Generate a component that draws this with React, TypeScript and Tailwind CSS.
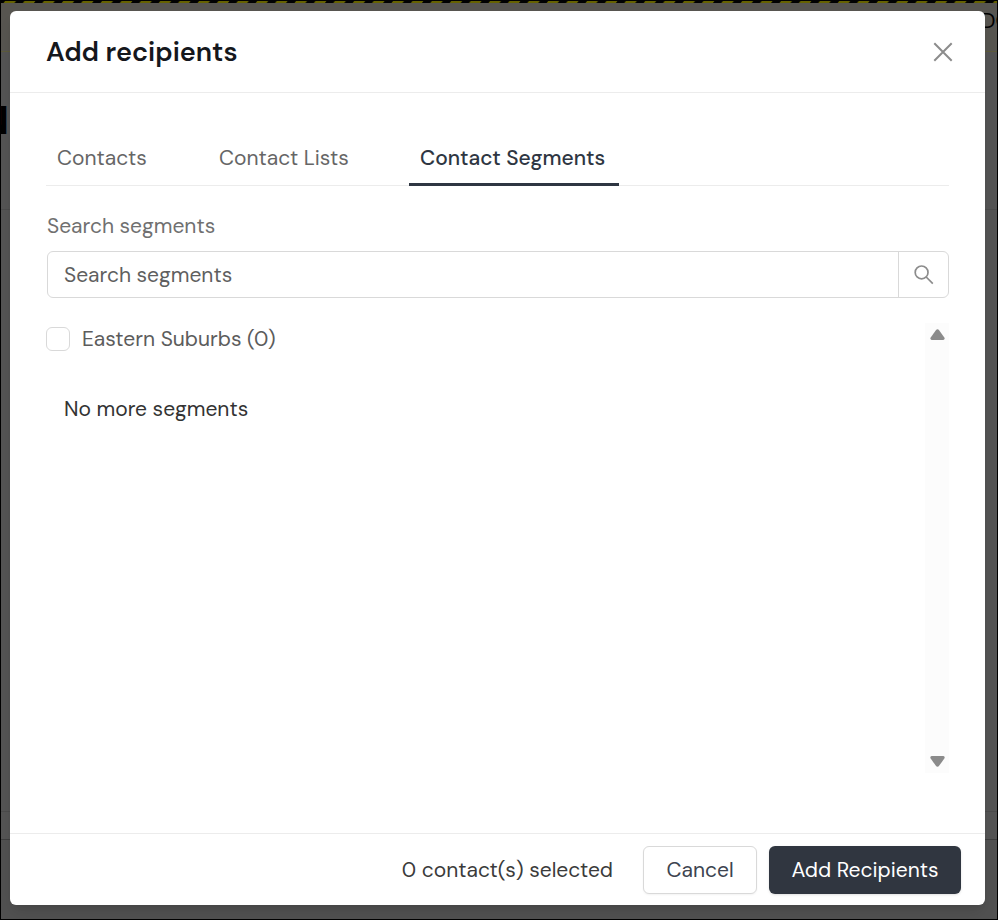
import { useState } from 'react'

const TABS = [
  { id: 'contacts', label: 'Contacts', width: 'w-28' },
  { id: 'lists', label: 'Contact Lists', width: 'w-[151px]' },
  { id: 'segments', label: 'Contact Segments', width: 'w-[210px]' },
]

const SEGMENTS = [{ id: 'eastern-suburbs', name: 'Eastern Suburbs', count: 0 }]

function CloseIcon() {
  return (
    <svg width="20" height="20" viewBox="0 0 20 20" fill="none" stroke="#8c8c8c" strokeWidth="2" aria-hidden="true">
      <path d="M1.3 1.3 18.7 18.7M18.7 1.3 1.3 18.7" />
    </svg>
  )
}

function SearchIcon() {
  return (
    <svg width="20" height="20" viewBox="0 0 20 20" fill="none" stroke="#8c8c8c" strokeWidth="1.7" aria-hidden="true">
      <circle cx="7.6" cy="7.4" r="6.4" />
      <path d="M12.2 12 18.8 18.6" />
    </svg>
  )
}

function Arrow({ down = false }: { down?: boolean }) {
  return (
    <svg width="15" height="11" viewBox="0 0 15 11" fill="#8b8b8b" aria-hidden="true">
      {down ? (
        <path d="M1.6 0H13.4Q15.2 .5 14.5 2.3L9.3 9.6Q7.5 12 5.7 9.6L.5 2.3Q-.2.5 1.6 0Z" />
      ) : (
        <path d="M1.6 11H13.4Q15.2 10.5 14.5 8.7L9.3 1.4Q7.5-1 5.7 1.4L.5 8.7Q-.2 10.5 1.6 11Z" />
      )}
    </svg>
  )
}

// Dimmed page behind the dialog
function Backdrop() {
  return (
    <div className="absolute inset-0 flex flex-col overflow-hidden border border-black bg-[#545454]" aria-hidden="true">
      <svg className="h-[2px] w-full shrink-0 bg-black">
        <defs>
          <pattern id="hazard" width="19.4" height="2" patternUnits="userSpaceOnUse">
            <path d="M4 0H15L13.5 2H2.5Z" fill="#666200" />
          </pattern>
        </defs>
        <rect width="100%" height="2" fill="url(#hazard)" />
      </svg>
      <div className="flex h-[49px] shrink-0 justify-end border-b border-[#5d5b3c] bg-[#575550] pt-1">
        <span className="w-4 overflow-hidden text-[21px] leading-7 whitespace-nowrap text-black">DO</span>
      </div>
      <div className="flex h-[158px] shrink-0 items-start border-b border-[#4c4c4c] pt-12">
        <span className="flex w-[9px] justify-end overflow-hidden pr-px text-[40px] leading-10 font-bold text-black">N</span>
      </div>
      <div className="flex-1 bg-[#545454]" />
      <div className="h-[29px] shrink-0 border-y border-t-[#4b4b4b] border-b-[#3e3e3e]" />
      <div className="h-[79px] shrink-0 bg-[#515151]" />
    </div>
  )
}

export default function App() {
  const [tab, setTab] = useState('segments')
  const [query, setQuery] = useState('')

  return (
    <div className="relative flex min-h-screen flex-col pt-[11px] pr-[13px] pb-[15px] pl-[10px] font-['DM_Sans',Inter,sans-serif] text-[21px] leading-8">
      <Backdrop />

      <div role="dialog" aria-labelledby="dialog-title" className="relative flex flex-1 flex-col rounded-md bg-white shadow-lg">
        <header className="flex h-[82px] items-center justify-between border-b border-[#ececec] pr-8 pl-9">
          <h1 id="dialog-title" className="text-[27px] leading-10 font-semibold text-[#15171c]">Add recipients</h1>
          <button type="button" aria-label="Close"><CloseIcon /></button>
        </header>

        <div className="flex flex-1 flex-col px-9 pt-9">
          <div role="tablist" className="flex gap-[50px] border-b border-[#ececec]">
            {TABS.map((t) => (
              <button
                key={t.id}
                type="button"
                role="tab"
                aria-selected={t.id === tab}
                onClick={() => setTab(t.id)}
                className={`-mb-px h-[57px] border-b-3 pt-[3px] pl-[11px] text-left whitespace-nowrap ${t.width} ${
                  t.id === tab ? 'border-[#2e3642] font-medium text-[#2e3642]' : 'border-transparent text-[#666]'
                }`}
              >
                {t.label}
              </button>
            ))}
          </div>

          <label htmlFor="search" className="mt-6 pl-px text-[#707070]">Search segments</label>
          <div className="mt-[9px] ml-px flex h-[47px] rounded-md border border-[#d9d9d9]">
            <input
              id="search"
              type="text"
              value={query}
              onChange={(e) => setQuery(e.target.value)}
              placeholder="Search segments"
              className="min-w-0 flex-1 rounded-l-md px-4 outline-none placeholder:text-[#5f5f5f]"
            />
            <button type="button" aria-label="Search" className="flex w-[50px] items-center justify-center border-l border-[#d9d9d9]">
              <SearchIcon />
            </button>
          </div>

          <div className="mt-[25px] mb-[60px] flex min-h-60 flex-1">
            <div className="flex-1">
              {SEGMENTS.map((s) => (
                <label key={s.id} className="flex items-center gap-3 text-[#5c5c5c]">
                  <input type="checkbox" className="size-6 appearance-none rounded-md border border-[#d9d9d9] bg-white checked:bg-[#2e3642]" />
                  {s.name} ({s.count})
                </label>
              ))}
              <p className="mt-[38px] pl-[18px] text-[#333]">No more segments</p>
            </div>
            <div className="flex w-6 flex-col items-center justify-between bg-[#fcfcfc] py-1.5">
              <Arrow />
              <Arrow down />
            </div>
          </div>
        </div>

        <footer className="flex items-center justify-end gap-3 border-t border-[#ececec] pt-3 pr-6 pb-[11px]">
          <span className="mr-[18px] text-[#3b3b3b]">0 contact(s) selected</span>
          <button type="button" className="h-12 w-[114px] rounded-md border border-[#d9d9d9] bg-white text-[#3d4450] shadow-xs">Cancel</button>
          <button type="button" className="h-12 w-48 rounded-md bg-[#303640] text-white shadow-sm">Add Recipients</button>
        </footer>
      </div>
    </div>
  )
}
